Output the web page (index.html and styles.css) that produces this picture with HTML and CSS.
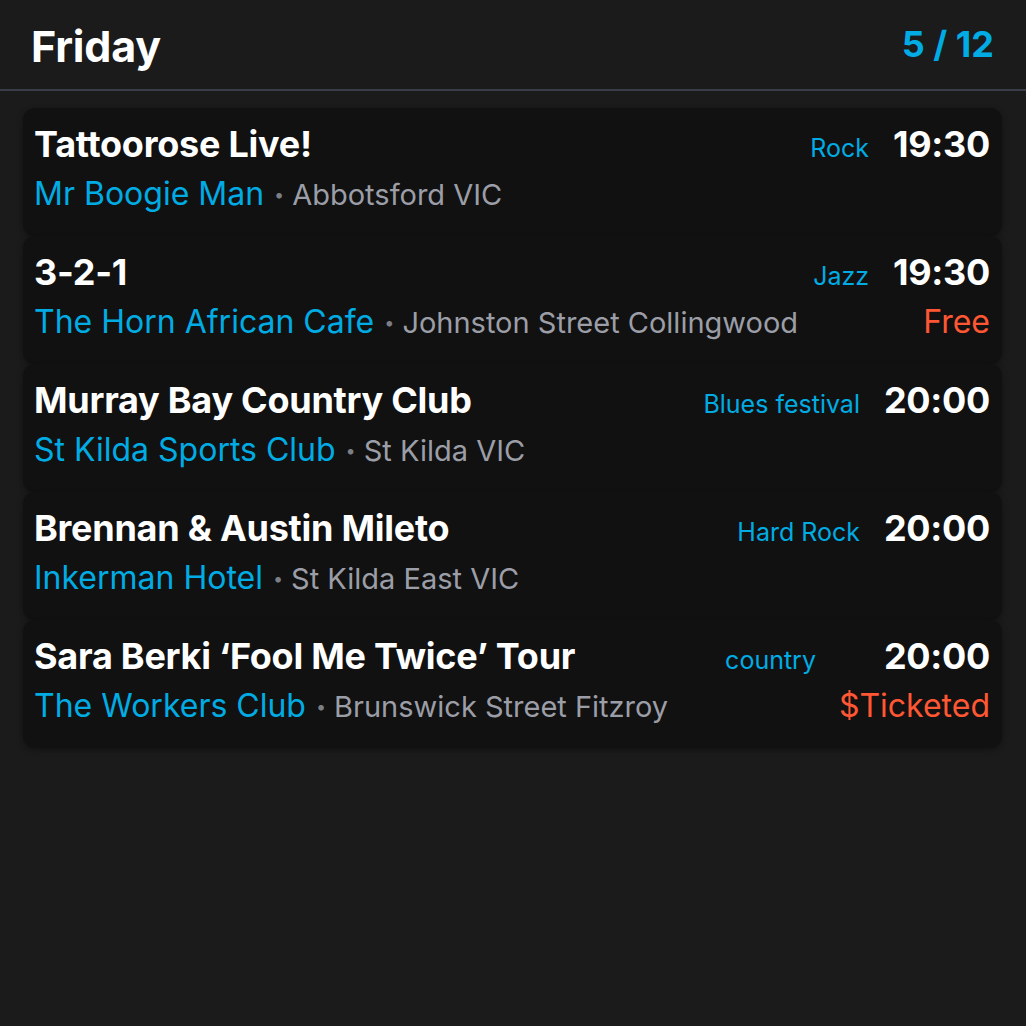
FILE: index.html
```html
<!DOCTYPE html>
<html lang="en">
<head>
<meta charset="utf-8">
<title>Friday</title>
<link rel="stylesheet" href="styles.css">
</head>
<body>
<div class="app">
  <header class="header">
    <h1 class="day">Friday</h1>
    <div class="count">5 / 12</div>
  </header>
  <main class="list">
    <article class="card">
      <div class="row">
        <div class="title">Tattoorose Live!</div>
        <div class="genre">Rock</div>
        <div class="time">19:30</div>
      </div>
      <div class="row">
        <div class="place"><span class="venue">Mr Boogie Man</span><span class="dot">•</span><span class="loc">Abbotsford VIC</span></div>
      </div>
    </article>
    <article class="card">
      <div class="row">
        <div class="title">3-2-1</div>
        <div class="genre">Jazz</div>
        <div class="time">19:30</div>
      </div>
      <div class="row">
        <div class="place"><span class="venue">The Horn African Cafe</span><span class="dot">•</span><span class="loc">Johnston Street Collingwood</span></div>
        <div class="price">Free</div>
      </div>
    </article>
    <article class="card">
      <div class="row">
        <div class="title">Murray Bay Country Club</div>
        <div class="genre">Blues festival</div>
        <div class="time">20:00</div>
      </div>
      <div class="row">
        <div class="place"><span class="venue">St Kilda Sports Club</span><span class="dot">•</span><span class="loc">St Kilda VIC</span></div>
      </div>
    </article>
    <article class="card">
      <div class="row">
        <div class="title">Brennan &amp; Austin Mileto</div>
        <div class="genre">Hard Rock</div>
        <div class="time">20:00</div>
      </div>
      <div class="row">
        <div class="place"><span class="venue">Inkerman Hotel</span><span class="dot">•</span><span class="loc">St Kilda East VIC</span></div>
      </div>
    </article>
    <article class="card">
      <div class="row">
        <div class="title">Sara Berki ‘Fool Me Twice’ Tour</div>
        <div class="genre genre-wide">country</div>
        <div class="time">20:00</div>
      </div>
      <div class="row">
        <div class="place"><span class="venue">The Workers Club</span><span class="dot">•</span><span class="loc">Brunswick Street Fitzroy</span></div>
        <div class="price">$Ticketed</div>
      </div>
    </article>
  </main>
</div>
</body>
</html>
```

FILE: styles.css
```css
* { box-sizing: border-box; }
html, body {
  margin: 0;
  padding: 0;
  background: #1b1b1b;
  height: 100%;
}
body {
  font-family: Inter, "Noto Sans", "Liberation Sans", sans-serif;
  color: #ffffff;
}
.app {
  width: 1026px;
  min-height: 1026px;
  background: #1b1b1b;
}
.header {
  display: flex;
  align-items: center;
  justify-content: space-between;
  height: 91px;
  padding: 2px 32px 0 31px;
  border-bottom: 2px solid #3a3e48;
}
.day {
  margin: 0;
  font-size: 43px;
  font-weight: 700;
  letter-spacing: -0.2px;
  color: #ffffff;
}
.count {
  font-size: 36px;
  font-weight: 700;
  color: #00ace3;
  margin-top: -4px;
}
.list {
  display: flex;
  flex-direction: column;
  gap: 0;
  padding: 17px 24px 0 23px;
}
.card {
  background: #111111;
  border-radius: 12px;
  padding: 12px 12px 17px 11px;
  height: 128px;
  box-shadow: 0 2px 6px rgba(0, 0, 0, 0.35);
}
.row {
  display: flex;
  align-items: baseline;
  height: 48px;
}
.row + .row { margin-top: 2px; }
.title {
  flex: 1;
  font-size: 36px;
  font-weight: 700;
  line-height: 48px;
  white-space: nowrap;
  letter-spacing: -0.25px;
}
.genre {
  font-size: 25px;
  line-height: 48px;
  color: #00ace3;
  margin-right: 24px;
}
.genre-wide { margin-right: 68px; }
.time {
  font-size: 36px;
  font-weight: 700;
  line-height: 48px;
  letter-spacing: -0.3px;
}
.place {
  flex: 1;
  font-size: 32px;
  line-height: 48px;
  white-space: nowrap;
}
.venue { color: #00ace3; }
.dot {
  color: #7c7e86;
  font-size: 18px;
  margin: 0 8px 0 10px;
  position: relative;
  top: -4px;
}
.loc {
  color: #9c9ea7;
  font-size: 29px;
}
.price {
  font-size: 32px;
  line-height: 48px;
  color: #ff5733;
}
```
